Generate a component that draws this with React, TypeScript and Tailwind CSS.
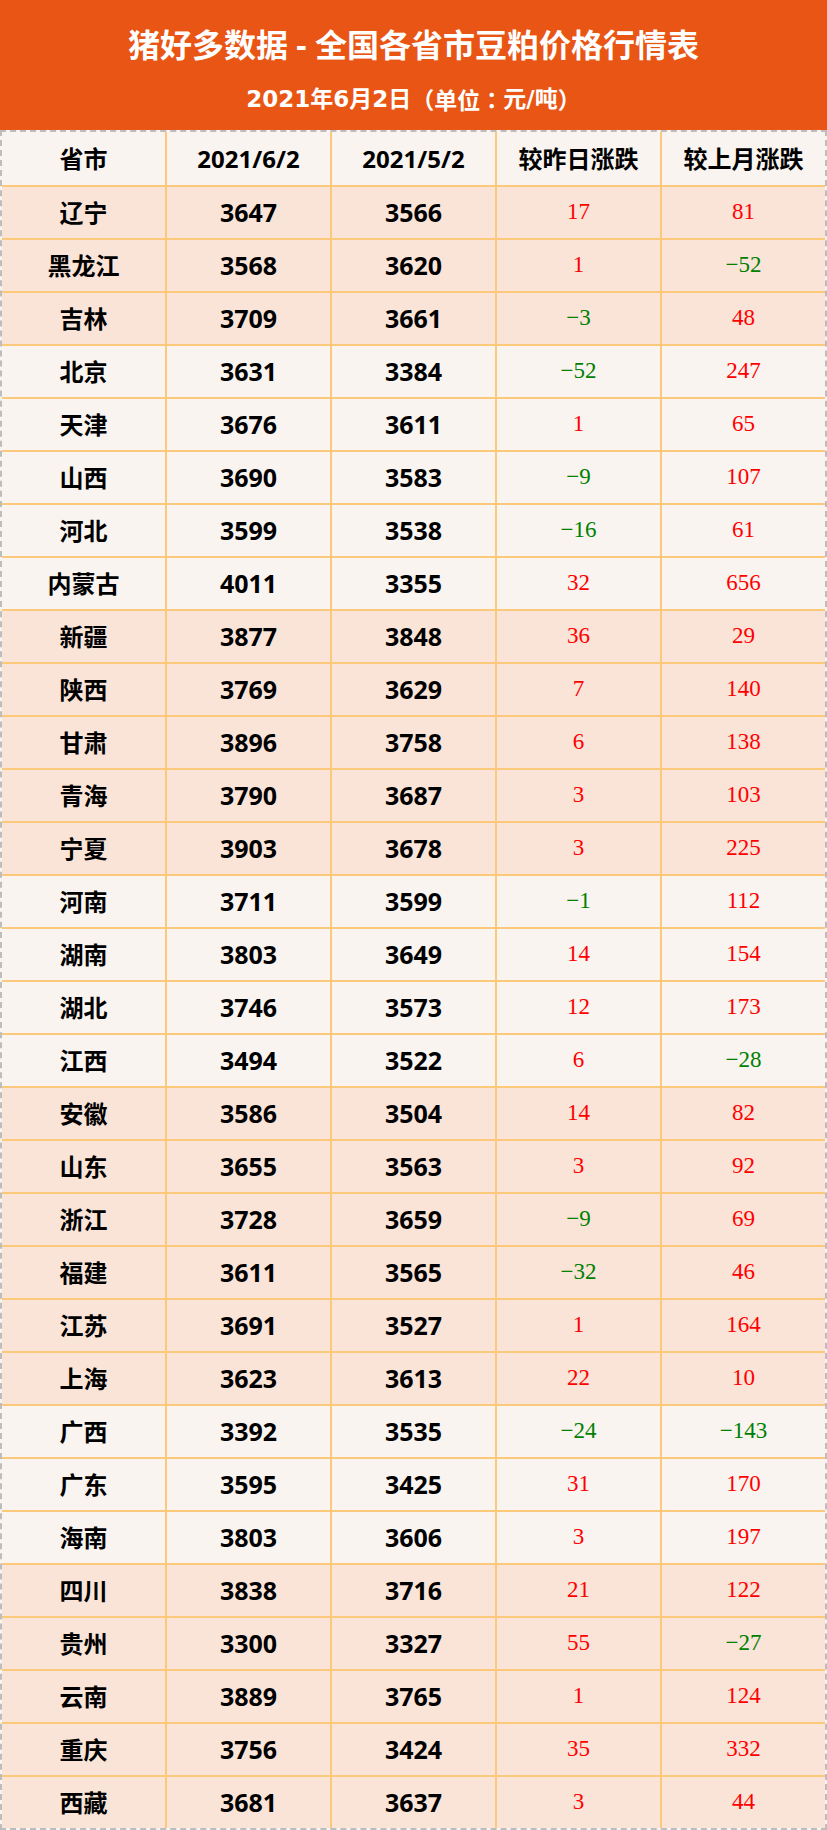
import React from "react";

type Row = [string, number, number, number, number];

const rows: Row[] = [
  ["辽宁", 3647, 3566, 17, 81],
  ["黑龙江", 3568, 3620, 1, -52],
  ["吉林", 3709, 3661, -3, 48],
  ["北京", 3631, 3384, -52, 247],
  ["天津", 3676, 3611, 1, 65],
  ["山西", 3690, 3583, -9, 107],
  ["河北", 3599, 3538, -16, 61],
  ["内蒙古", 4011, 3355, 32, 656],
  ["新疆", 3877, 3848, 36, 29],
  ["陕西", 3769, 3629, 7, 140],
  ["甘肃", 3896, 3758, 6, 138],
  ["青海", 3790, 3687, 3, 103],
  ["宁夏", 3903, 3678, 3, 225],
  ["河南", 3711, 3599, -1, 112],
  ["湖南", 3803, 3649, 14, 154],
  ["湖北", 3746, 3573, 12, 173],
  ["江西", 3494, 3522, 6, -28],
  ["安徽", 3586, 3504, 14, 82],
  ["山东", 3655, 3563, 3, 92],
  ["浙江", 3728, 3659, -9, 69],
  ["福建", 3611, 3565, -32, 46],
  ["江苏", 3691, 3527, 1, 164],
  ["上海", 3623, 3613, 22, 10],
  ["广西", 3392, 3535, -24, -143],
  ["广东", 3595, 3425, 31, 170],
  ["海南", 3803, 3606, 3, 197],
  ["四川", 3838, 3716, 21, 122],
  ["贵州", 3300, 3327, 55, -27],
  ["云南", 3889, 3765, 1, 124],
  ["重庆", 3756, 3424, 35, 332],
  ["西藏", 3681, 3637, 3, 44],
];

const peach = new Set([1, 2, 3, 9, 10, 11, 12, 13, 18, 19, 20, 21, 22, 23, 27, 28, 29, 30, 31]);

const sans = "font-['Noto_Sans','Noto_Sans_CJK_SC',sans-serif]";

function Change({ v }: { v: number }) {
  const neg = v < 0;
  return (
    <span
      className={
        "font-['Liberation_Serif','Noto_Serif_CJK_SC',serif] text-[23px] " +
        (neg ? "text-[#008000]" : "text-[#ff0000]")
      }
    >
      {neg ? "−" + Math.abs(v) : String(v)}
    </span>
  );
}

export default function App() {
  return (
    <div className={"w-[827px] h-[1830px] bg-white " + sans}>
      <div className="h-[130px] bg-[#e95514] flex flex-col items-center text-white font-bold">
        <div className="mt-[27px] text-[32px] leading-[36px] whitespace-pre">猪好多数据 - 全国各省市豆粕价格行情表</div>
        <div className="mt-[22px] text-[23px] leading-[28px] font-['DejaVu_Sans','Noto_Sans_CJK_SC',sans-serif] flex items-center">
          <span>2021年6月2日</span>
          <span className="font-['Noto_Sans_CJK_SC',sans-serif]">（</span>
          <span className="font-['Noto_Sans_CJK_SC',sans-serif]">单位</span>
          <span className="font-['Noto_Sans_CJK_TC',sans-serif]">：</span>
          <span>元/吨</span>
          <span className="font-['Noto_Sans_CJK_SC',sans-serif]">）</span>
        </div>
      </div>
      <div className="border-2 border-dashed border-[#bdbdbd] bg-[#f9f4f0]">
        <div className="grid grid-cols-5 gap-[2px] bg-[#fcc97b]">
          {["省市", "2021/6/2", "2021/5/2", "较昨日涨跌", "较上月涨跌"].map((h) => (
            <div
              key={h}
              className="h-[53px] bg-[#f9f4f0] flex items-center justify-center text-[24px] font-bold text-black"
            >
              {h}
            </div>
          ))}
          {rows.map((r, i) => {
            const bg = peach.has(i + 1) ? "bg-[#fae4d8]" : "bg-[#f9f4f0]";
            return (
              <React.Fragment key={r[0]}>
                <div className={"h-[51px] flex items-center justify-center text-[24px] font-bold text-black " + bg}>
                  {r[0]}
                </div>
                <div className={"h-[51px] flex items-center justify-center text-[25px] font-bold text-black " + bg}>
                  {r[1]}
                </div>
                <div className={"h-[51px] flex items-center justify-center text-[25px] font-bold text-black " + bg}>
                  {r[2]}
                </div>
                <div className={"h-[51px] flex items-center justify-center " + bg}>
                  <Change v={r[3]} />
                </div>
                <div className={"h-[51px] flex items-center justify-center " + bg}>
                  <Change v={r[4]} />
                </div>
              </React.Fragment>
            );
          })}
        </div>
      </div>
    </div>
  );
}
